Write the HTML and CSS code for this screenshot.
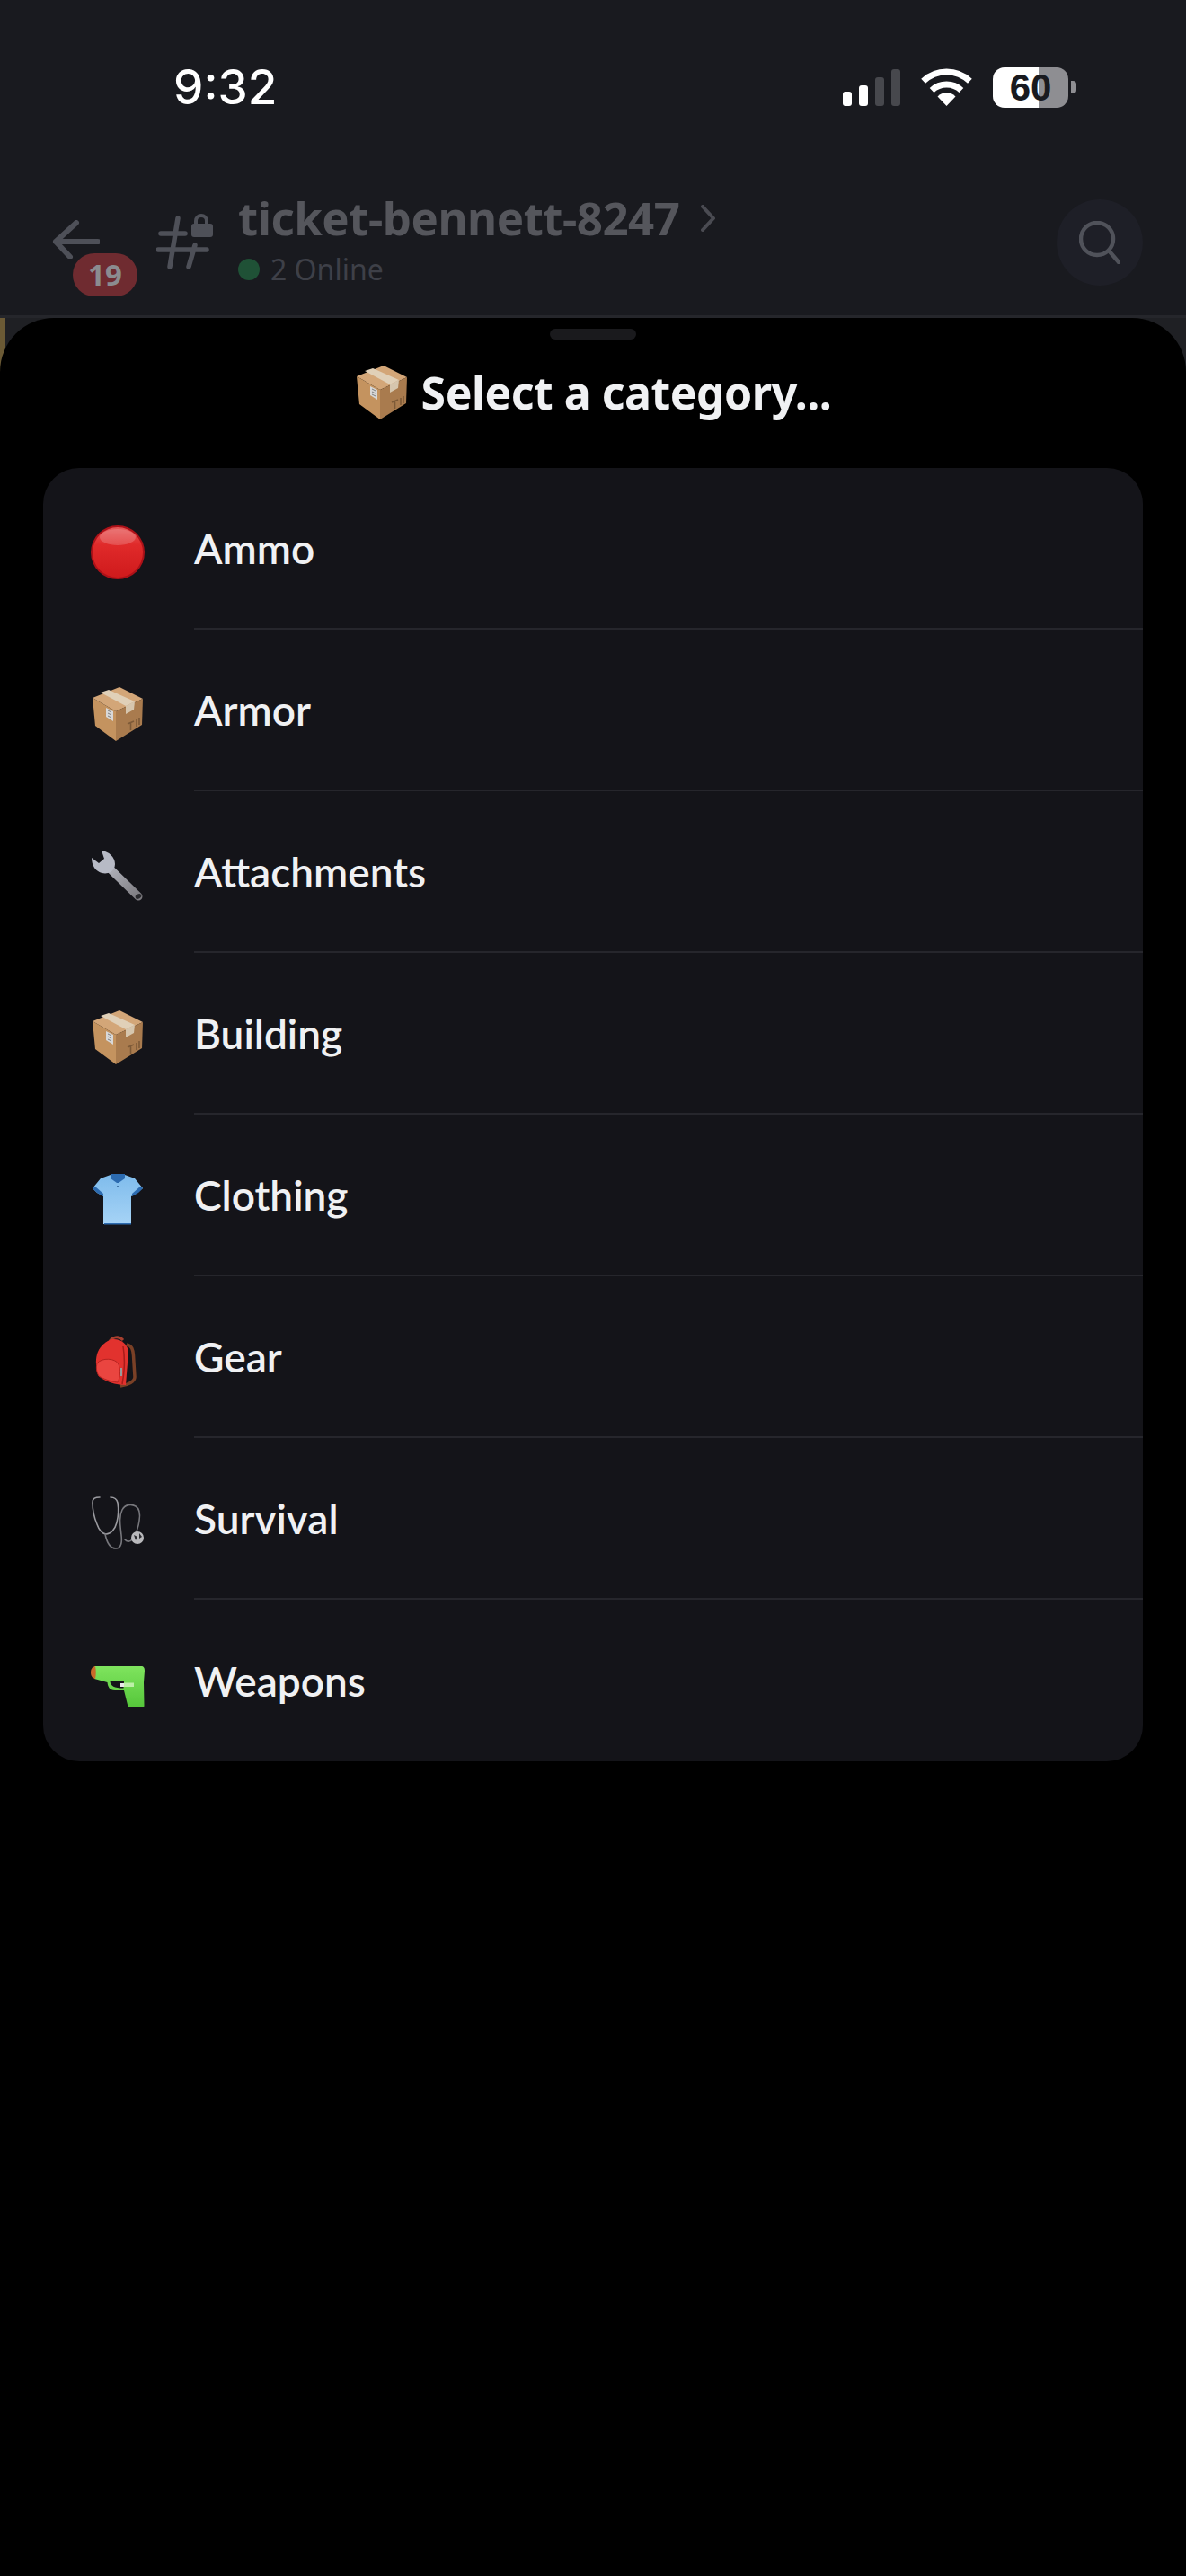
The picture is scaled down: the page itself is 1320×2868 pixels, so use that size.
FILE: index.html
```html
<!DOCTYPE html>
<html lang="en">
<head>
  <meta charset="UTF-8">
  <meta name="viewport" content="width=device-width, initial-scale=1.0">
  <title>Select a category</title>
  <link rel="stylesheet" href="styles.css">
</head>
<body>
  <!-- shared emoji art and gradients -->
  <svg class="defs" aria-hidden="true">
    <defs>
      <linearGradient id="ballFill" x1="0" y1="0" x2="0" y2="1">
        <stop offset="0" stop-color="#e65a5a"/>
        <stop offset="0.35" stop-color="#e02a2a"/>
        <stop offset="1" stop-color="#cf1a1c"/>
      </linearGradient>
      <linearGradient id="shirtFill" x1="0" y1="0" x2="0" y2="1">
        <stop offset="0" stop-color="#7fbcec"/>
        <stop offset="1" stop-color="#a6d3f6"/>
      </linearGradient>
      <linearGradient id="gunFill" x1="0" y1="0" x2="0" y2="1">
        <stop offset="0" stop-color="#7fe45e"/>
        <stop offset="1" stop-color="#55c63a"/>
      </linearGradient>
      <linearGradient id="wrenchFill" x1="0" y1="0" x2="1" y2="1">
        <stop offset="0" stop-color="#b4b6bf"/>
        <stop offset="1" stop-color="#7d7b80"/>
      </linearGradient>
      <symbol id="box" viewBox="0 0 60 60">
        <path d="M32 0 58 13 28 27 2 12Z" fill="#d3a678"/>
        <path d="M2 12 28 27 28 60 5 43Z" fill="#c4935f"/>
        <path d="M28 27 58 13 57 42 28 60Z" fill="#a97b4e"/>
        <path d="M11 6 20 3 49 16 39 21Z" fill="#e0d0b8"/>
        <path d="M39 21 49 16 48 25 39 30Z" fill="#d6c6ae"/>
        <path d="M17 23 25 27 25 38 17 33Z" fill="#d8d8d8"/>
        <path d="M19 26 23 28M19 29 23 31M19 32 23 34" stroke="#7e7e7e" stroke-width="1" fill="none"/>
        <path d="M41 41 48 38M44.500 40V48M51 36V44M54 34V42" stroke="#7d5a38" stroke-width="1.600" fill="none"/>
      </symbol>
    </defs>
  </svg>

  <!-- channel screen behind the sheet -->
  <div class="status-bar">
    <span class="clock">9:32</span>
    <div class="status-icons">
      <div class="signal">
        <span class="bar bar-1"></span>
        <span class="bar bar-2"></span>
        <span class="bar bar-3 off"></span>
        <span class="bar bar-4 off"></span>
      </div>
      <svg class="wifi" viewBox="0 0 57 42">
        <path d="M18.500 31.500A14 14 0 0 1 38.500 31.500L28.500 42Z" fill="#fff"/>
        <path d="M12.100 24.500A24 24 0 0 1 44.900 24.500" fill="none" stroke="#fff" stroke-width="7"/>
        <path d="M2.600 14.200A38 38 0 0 1 54.400 14.200" fill="none" stroke="#fff" stroke-width="7"/>
      </svg>
      <div class="battery">60</div>
      <span class="battery-nub"></span>
    </div>
  </div>

  <header class="channel-header">
    <div class="back">
      <svg class="back-arrow" viewBox="0 0 53 43">
        <path d="M51 24H4M27 3 4 24 20 41" fill="none" stroke="#4e5058" stroke-width="6" stroke-linecap="round" stroke-linejoin="round"/>
      </svg>
      <span class="unread-badge">19</span>
    </div>
    <svg class="hash" viewBox="0 0 63 63">
      <g fill="none" stroke="#4e5058" stroke-width="5.500" stroke-linecap="round">
        <path d="M24 6 15 60M43 36 36 60M5 23H32M2 41H56"/>
        <path d="M44 13V9A6 6 0 0 1 56 9V13" stroke-width="4"/>
      </g>
      <rect x="39" y="12" width="24" height="15" rx="3" fill="#4e5058"/>
    </svg>
    <div class="channel-info">
      <div class="channel-name">
        <span>ticket-bennett-8247</span>
        <svg class="chevron" viewBox="0 0 16 30">
          <path d="M2 2 14 15 2 28" fill="none" stroke="#4a4b52" stroke-width="4" stroke-linecap="round" stroke-linejoin="round"/>
        </svg>
      </div>
      <div class="online"><span class="online-dot"></span>2 Online</div>
    </div>
    <div class="search-btn">
      <svg class="search-icon" viewBox="0 0 46 48">
        <circle cx="20" cy="20" r="18" fill="none" stroke="#50525a" stroke-width="4.500"/>
        <path d="M33 33 45 47" stroke="#50525a" stroke-width="4.500" stroke-linecap="round"/>
      </svg>
    </div>
  </header>

  <!-- select sheet -->
  <div class="sheet-backdrop">
    <section class="sheet">
      <div class="handle"></div>
      <h1 class="sheet-title">
        <svg class="title-emoji"><use href="#box"/></svg>
        <span>Select a category...</span>
      </h1>
      <div class="card">
        <div class="row">
          <svg class="emoji" viewBox="0 0 60 60">
            <circle cx="30" cy="30" r="30" fill="#ad1118"/>
            <circle cx="30" cy="30" r="28" fill="url(#ballFill)"/>
            <ellipse cx="30" cy="13" rx="20" ry="9" fill="#fff" opacity="0.18"/>
          </svg>
          <div class="row-label">Ammo</div>
        </div>
        <div class="row">
          <svg class="emoji"><use href="#box"/></svg>
          <div class="row-label">Armor</div>
        </div>
        <div class="row">
          <svg class="emoji" viewBox="0 0 60 60">
            <path d="M18 19 53 53" stroke="url(#wrenchFill)" stroke-width="9" stroke-linecap="round" fill="none"/>
            <path d="M12 2C20 3 27 9 27 17 27 21 25 24 22 26 16 29 8 27 4 21 2 18 1 14 1 10L9 16 15 11Z" fill="#b7bac5"/>
            <ellipse cx="53" cy="53" rx="3.500" ry="2.500" fill="#2a2a2e" transform="rotate(-30 53 53)"/>
          </svg>
          <div class="row-label">Attachments</div>
        </div>
        <div class="row">
          <svg class="emoji"><use href="#box"/></svg>
          <div class="row-label">Building</div>
        </div>
        <div class="row">
          <svg class="emoji" viewBox="0 0 60 60">
            <path d="M22 3 11 7 2 18 7 23 14 27V58H45V27L52 23 58 18 49 7 38 3 30 9Z" fill="url(#shirtFill)"/>
            <path d="M2 18 7 23 14 27 14 24 5 16ZM58 18 53 23 46 27 46 24 55 16Z" fill="#2c6bb0"/>
            <path d="M22 2 38 2 38 7 31 12 29 12 22 7Z" fill="#2c6bb0"/>
            <path d="M15 57H45V58.500H15Z" fill="#2c6bb0"/>
            <circle cx="30" cy="16" r="1" fill="#2c5c90"/>
          </svg>
          <div class="row-label">Clothing</div>
        </div>
        <div class="row">
          <svg class="emoji" viewBox="0 0 60 60">
            <path d="M40 12C46 13 47 18 47.500 24L49 48C49 53 42 57 33 58" fill="none" stroke="#7a4026" stroke-width="3.500"/>
            <path d="M21 9C23 3 32 2 36 7" fill="none" stroke="#a8402f" stroke-width="3"/>
            <path d="M24 6C33 5 41 11 42 20L39 57C28 57 15 53 9 47 5 38 5 27 8 20 11 13 17 8 24 6Z" fill="#e2322e"/>
            <path d="M36 14C38 26 38 40 35 56" stroke="#a81c1a" stroke-width="1.500" fill="none"/>
            <path d="M7 33C12 26 28 27 31 34 33 40 33 48 30 54 21 53 14 50 9 47 6 42 6 37 7 33Z" fill="#ea4540" stroke="#b52320" stroke-width="1"/>
            <path d="M34 38V47" stroke="#9a9a9a" stroke-width="2"/>
          </svg>
          <div class="row-label">Gear</div>
        </div>
        <div class="row">
          <svg class="emoji" viewBox="0 0 60 60">
            <g fill="none" stroke-linecap="round" stroke-width="1.600">
              <path d="M10 2C5 2 2 3 2 8 2 16 4 25 7 32 9 38 13 43 17 43 22 43 27 38 29 30 31 22 31 14 30 8 29 4 26 2 22 2" stroke="#9a9a9f"/>
              <path d="M16 43C18 53 22 59 28 59 34 59 35 52 34 44 33 34 31 24 35 16 38 10 45 9 50 12 55 15 55 22 54 28 53 36 50 43 47 48 44 52 40 52 38 49" stroke="#77777c"/>
            </g>
            <circle cx="52" cy="47" r="7" fill="#b9b9bc"/>
            <path d="M48 44 52 46 50 50ZM54 42 57 46 54 48Z" fill="#2c2c30"/>
          </svg>
          <div class="row-label">Survival</div>
        </div>
        <div class="row">
          <svg class="emoji" viewBox="0 0 60 60">
            <path d="M4 10H56C59 10 60 12 60 15L59 28 59.500 54C59.500 56 58 56 56 56H44C42 56 41.500 55 41 53L37 37H27C21 37 19 33 18.500 28L4 24Z" fill="url(#gunFill)"/>
            <path d="M21.500 27C22 32 26 34.500 36.500 34.500L37 27Z" fill="#141419"/>
            <path d="M37 28.500H48V33H37Z" fill="#bdf0a8"/>
            <path d="M33 29H37V33H33Z" fill="#e8e8e8"/>
            <path d="M5 10C1 11 0 14 0 17 0 20 1 23 5 24 6 19 6 15 5 10Z" fill="#c96a2a"/>
          </svg>
          <div class="row-label">Weapons</div>
        </div>
      </div>
    </section>
  </div>
</body>
</html>
```

FILE: styles.css
```css
html, body {
  margin: 0;
  padding: 0;
}
body {
  width: 1320px;
  height: 2868px;
  display: flex;
  flex-direction: column;
  background-color: #000;
  overflow: hidden;
  font-family: "Noto Sans", sans-serif;
}
.defs {
  position: absolute;
  width: 0;
  height: 0;
}

/* status bar */
.status-bar {
  height: 194px;
  padding: 0 122px 0 193px;
  display: flex;
  align-items: center;
  justify-content: space-between;
  background-color: #191a1f;
}
.clock {
  font-family: Inter, sans-serif;
  font-size: 53px;
  font-weight: 500;
  color: #fff;
}
.status-icons {
  display: flex;
  align-items: center;
}
.signal {
  display: flex;
  align-items: flex-end;
  gap: 7.5px;
  height: 41px;
  margin-right: 23px;
}
.bar {
  width: 10.5px;
  border-radius: 3px;
  background-color: #fff;
}
.bar-1 { height: 16px; }
.bar-2 { height: 23px; }
.bar-3 { height: 32px; }
.bar-4 { height: 41px; }
.bar.off {
  background-color: #47484d;
}
.wifi {
  width: 57px;
  height: 42px;
  margin-right: 23px;
}
.battery {
  width: 84px;
  height: 45px;
  border-radius: 13px;
  background: linear-gradient(90deg, #fff 0 51px, #8e8e92 51px);
  color: #191a1f;
  font-family: "Liberation Sans", sans-serif;
  font-size: 42px;
  font-weight: 700;
  line-height: 45px;
  text-align: center;
}
.battery-nub {
  width: 6px;
  height: 14px;
  margin-left: 3px;
  border-radius: 0 4px 4px 0;
  background-color: #8e8e92;
}

/* channel header */
.channel-header {
  height: 157px;
  padding: 0 48px 0 58px;
  display: flex;
  align-items: flex-start;
  background-color: #191a1f;
  border-bottom: 3px solid #25262b;
}
.back {
  position: relative;
  margin-top: 51px;
  width: 53px;
  height: 43px;
}
.back-arrow {
  display: block;
  width: 53px;
  height: 43px;
}
.unread-badge {
  position: absolute;
  left: 23px;
  top: 37px;
  width: 72px;
  height: 48px;
  border-radius: 24px;
  background-color: #6f2b30;
  color: #8b8c90;
  font-size: 33px;
  font-weight: 700;
  line-height: 48px;
  text-align: center;
}
.hash {
  width: 63px;
  height: 63px;
  margin: 43px 0 0 63px;
}
.channel-info {
  margin: 20px 0 0 28px;
}
.channel-name {
  display: flex;
  align-items: center;
  gap: 24px;
  height: 56px;
  color: #55565c;
  font-size: 51px;
  font-weight: 700;
  letter-spacing: -0.5px;
  line-height: 56px;
}
.chevron {
  width: 16px;
  height: 30px;
  margin-top: 2px;
}
.online {
  display: flex;
  align-items: center;
  gap: 12px;
  margin-top: 10px;
  color: #3e4048;
  font-size: 32px;
  line-height: 40px;
}
.online-dot {
  width: 24px;
  height: 24px;
  border-radius: 50%;
  background-color: #1f5136;
}
.search-btn {
  width: 96px;
  height: 96px;
  margin: 28px 0 0 auto;
  border-radius: 50%;
  background-color: #1e1f27;
  display: flex;
  align-items: center;
  justify-content: center;
}
.search-icon {
  width: 46px;
  height: 48px;
}

/* bottom sheet */
.sheet-backdrop {
  flex: 1;
  background: linear-gradient(90deg, #6b5a35 0 6px, #1f2024 6px);
}
.sheet {
  height: 100%;
  border-radius: 60px 60px 0 0;
  background-color: #000;
  padding: 12px 48px 0;
  box-sizing: border-box;
}
.handle {
  width: 96px;
  height: 12px;
  margin: 0 auto;
  border-radius: 6px;
  background-color: #1a1a1d;
}
.sheet-title {
  height: 118px;
  margin: 0 0 25px;
  display: flex;
  align-items: center;
  justify-content: center;
  gap: 14px;
  color: #f0f1f3;
  font-size: 50px;
  font-weight: 700;
  letter-spacing: -0.5px;
}
.title-emoji {
  width: 60px;
  height: 62px;
}
.card {
  border-radius: 40px;
  background-color: #141419;
  overflow: hidden;
}
.row {
  height: 180px;
  padding-left: 53px;
  display: flex;
  align-items: center;
}
.emoji {
  flex: none;
  width: 60px;
  height: 60px;
  margin: 8px 55px 0 0;
}
.row-label {
  flex: 1;
  height: 100%;
  box-sizing: border-box;
  display: flex;
  align-items: center;
  border-bottom: 2px solid #26262c;
  color: #f0f1f3;
  font-family: Lato, "Noto Sans", sans-serif;
  font-size: 46px;
  font-weight: 600;
}
.row:last-child .row-label {
  border-bottom: 0;
}
```
